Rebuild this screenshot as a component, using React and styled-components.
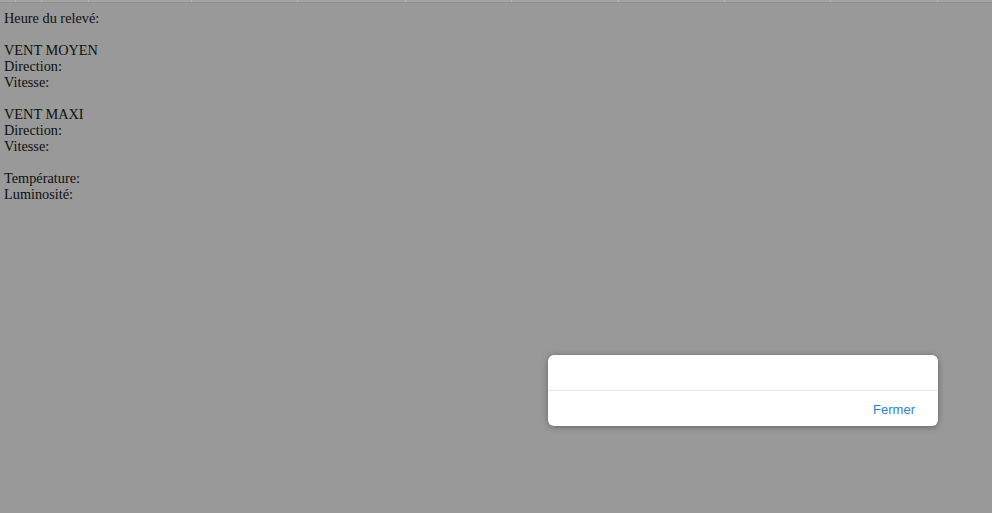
import React from 'react';
import styled, { createGlobalStyle } from 'styled-components';

const GlobalStyle = createGlobalStyle`
  html, body {
    margin: 0;
    padding: 0;
    background: #999999;
  }
  body {
    width: 992px;
    height: 513px;
    overflow: hidden;
    font-family: "Liberation Serif", "Times New Roman", serif;
  }
`;

const Page = styled.div`
  position: relative;
  width: 992px;
  height: 513px;
  background: #999999;
`;

const HeaderStrip = styled.div`
  display: flex;
  height: 2px;
  background: #a3a3a3;
  border-bottom: 1px solid #8f8f8f;
`;

const HeaderCell = styled.div`
  width: ${(p) => p.w}px;
  flex: none;
  border-right: 1px solid #b3b3b3;
  box-sizing: border-box;
  &:last-child {
    flex: 1;
    border-right: none;
  }
`;

const Readings = styled.div`
  padding: 7px 4px 0;
  font-size: 14.3px;
  line-height: 16px;
  color: #0f0f0f;
`;

const Line = styled.div`
  min-height: 16px;
`;

const Backdrop = styled.div`
  position: absolute;
  inset: 0;
  pointer-events: none;
`;

const Dialog = styled.div`
  position: absolute;
  left: 548px;
  top: 355px;
  width: 390px;
  background: #ffffff;
  border-radius: 6px;
  box-shadow: 0 1px 6px rgba(0, 0, 0, 0.35);
  overflow: hidden;
  font-family: "Liberation Sans", Arial, sans-serif;
`;

const DialogBody = styled.div`
  height: 35px;
  border-bottom: 1px solid #e4e4e4;
`;

const DialogFooter = styled.div`
  display: flex;
  justify-content: flex-end;
  align-items: center;
  height: 35px;
  padding: 1px 23px 0 0;
  box-sizing: border-box;
`;

const CloseButton = styled.button`
  border: none;
  background: none;
  padding: 0;
  font-family: inherit;
  font-size: 13px;
  color: #2f7de1;
  cursor: pointer;
`;

const columns = [16, 26, 47, 103, 106, 108, 106, 107, 106, 106, 107, 54];

const lines = [
  'Heure du relevé:',
  '',
  'VENT MOYEN',
  'Direction:',
  'Vitesse:',
  '',
  'VENT MAXI',
  'Direction:',
  'Vitesse:',
  '',
  'Température:',
  'Luminosité:',
];

const App = () => {
  return (
    <Page>
      <GlobalStyle />
      <HeaderStrip>
        {columns.map((w, i) => (
          <HeaderCell key={i} w={w} />
        ))}
      </HeaderStrip>
      <Readings>
        {lines.map((text, i) => (
          <Line key={i}>{text}</Line>
        ))}
      </Readings>
      <Backdrop>
        <Dialog>
          <DialogBody />
          <DialogFooter>
            <CloseButton>Fermer</CloseButton>
          </DialogFooter>
        </Dialog>
      </Backdrop>
    </Page>
  );
};

export default App;
